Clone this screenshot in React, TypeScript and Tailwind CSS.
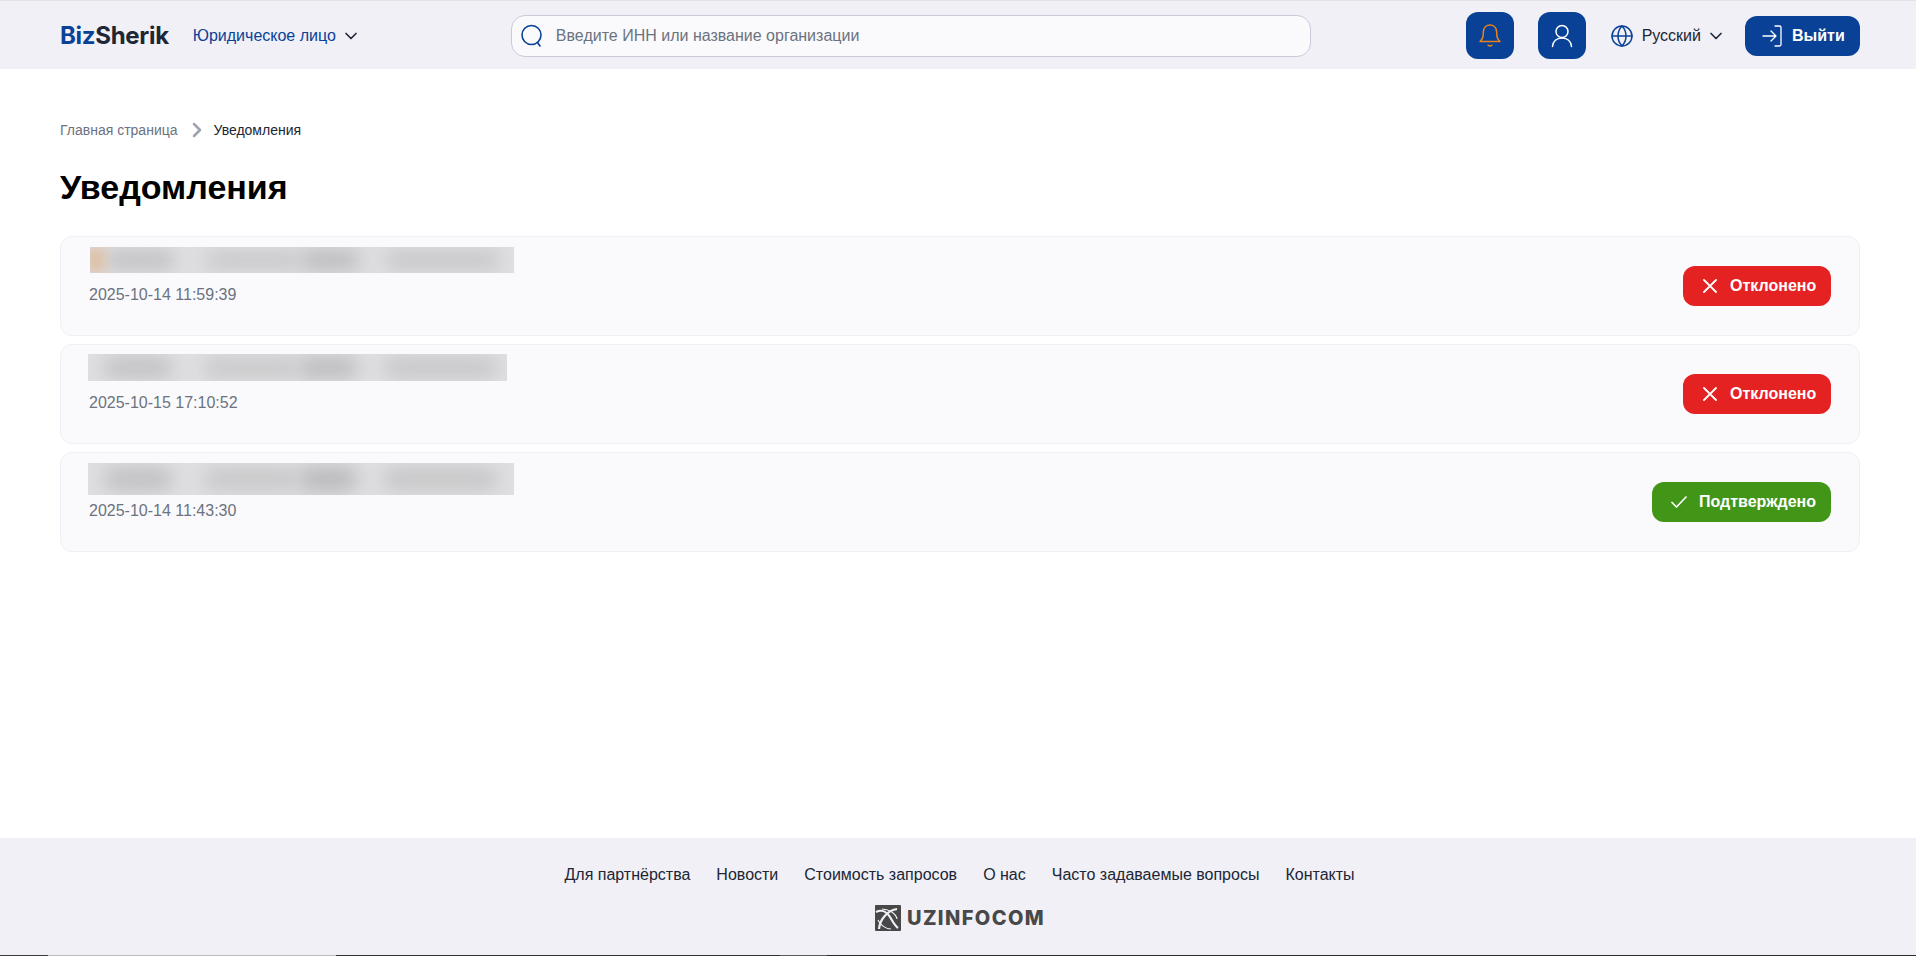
import React from "react";
import { ChevronDown, ChevronRight, Globe } from "lucide-react";

function Blur({ w, h, ml, tint }: { w: number; h: number; ml: number; tint?: boolean }) {
  return (
    <div className="relative overflow-hidden bg-[#dfdfe1]" style={{ width: w, height: h, marginLeft: ml }}>
      <div className="absolute inset-0 flex items-center pl-[15px]">
        <div className="h-[75%] w-[70px] rounded-full bg-[#c2c2c4] blur-[9px]" />
        <div className="ml-[30px] h-[70%] w-[95px] rounded-full bg-[#c8c8ca] blur-[9px]" />
        <div className="h-[80%] w-[60px] rounded-full bg-[#bcbcbe] blur-[9px]" />
        <div className="ml-[25px] h-[70%] w-[115px] rounded-full bg-[#c6c6c8] blur-[9px]" />
      </div>
      {tint && <div className="absolute -left-[4px] top-0 h-full w-[20px] bg-[#dcc4ad] blur-[5px]" />}
    </div>
  );
}

function Card({ ml, w, h, top, gap, date, status, tint }: { ml: number; w: number; h: number; top: number; gap: number; date: string; status: "no" | "ok"; tint?: boolean }) {
  return (
    <div className="flex h-[100px] items-start justify-between rounded-[12px] border border-[#f0f0f6] bg-[#fafafc] pr-[28px]">
      <div style={{ paddingTop: top }}>
        <Blur w={w} h={h} ml={ml} tint={tint} />
        <div className="ml-[28px] text-[16px] leading-[24px] text-[#6b7280]" style={{ marginTop: gap }}>{date}</div>
      </div>
      {status === "no" ? (
        <div className="mt-[29px] flex h-[40px] w-[148px] items-center rounded-[12px] bg-[#e52222] pl-[20px] text-[16px] font-bold text-white">
          <svg width="14" height="14" viewBox="0 0 14 14" fill="none" stroke="currentColor" strokeWidth="1.8" strokeLinecap="round">
            <path d="M1 1l12 12M13 1L1 13" />
          </svg>
          <span className="ml-[13px]">Отклонено</span>
        </div>
      ) : (
        <div className="mt-[29px] flex h-[40px] w-[179px] items-center rounded-[12px] bg-[#429617] pl-[19px] text-[16px] font-bold text-white">
          <svg width="16" height="12" viewBox="0 0 16 12" fill="none" stroke="currentColor" strokeWidth="1.7" strokeLinecap="round" strokeLinejoin="round">
            <path d="M1 6.5l4.500 4.500L15 1" />
          </svg>
          <span className="ml-[12px]">Подтверждено</span>
        </div>
      )}
    </div>
  );
}

const segments = [
  "w-[48px] bg-[#3a3a3a]",
  "w-[288px] bg-[#b9b9b9]",
  "w-[444px] bg-[#333331]",
  "w-[47px] bg-[#5c5c60]",
  "flex-1 bg-[#2b2b2b]",
];

export default function App() {
  return (
    <div className="flex h-[956px] flex-col overflow-hidden bg-white font-['Liberation_Sans',Arial,sans-serif]">
      <header className="flex h-[69px] items-center border-t border-[#e3e3e6] bg-[#f0f0f6] pl-[60px] pr-[56px] pt-[1px]">
        <div className="font-['Inter',sans-serif] text-[24px] font-bold tracking-[-0.3px] text-[#202634]">
          <span className="text-[#094196]">Biz</span>Sherik
        </div>
        <div className="ml-[24px] flex items-center text-[16px] text-[#094196]">
          Юридическое лицо
          <ChevronDown size={20} className="ml-[5px] text-[#202634]" />
        </div>
        <div className="ml-[150px] flex h-[42px] w-[800px] items-center rounded-[14px] border border-[#c9cbd9] bg-[#fafafc] pl-[8px]">
          <svg width="24" height="24" viewBox="0 0 24 24" fill="none" stroke="#094196" strokeWidth="1.6" strokeLinecap="round">
            <circle cx="11.500" cy="11" r="9.500" />
            <path d="M17.500 18.500l2.500 3.500" />
          </svg>
          <span className="ml-[12px] text-[16px] text-[#6b7280]">Введите ИНН или название организации</span>
        </div>
        <div className="ml-auto flex items-center">
          <button className="flex h-[47px] w-[48px] items-center justify-center rounded-[12px] bg-[#094196]">
            <svg width="24" height="24" viewBox="0 0 24 24" fill="none" stroke="#e8821e" strokeWidth="1.5" strokeLinecap="round" strokeLinejoin="round">
              <path d="M2 17.500c2-1.500 3-3.500 3.200-6.500l.2-3.500C5.700 3.800 8.400 1 12 1s6.300 2.800 6.600 6.500l.2 3.500c.2 3 1.200 5 3.200 6.500z" />
              <path d="M10 21.200c1.200 1 2.800 1 4 0" />
            </svg>
          </button>
          <button className="ml-[24px] flex h-[47px] w-[48px] items-center justify-center rounded-[12px] bg-[#094196]">
            <svg width="24" height="24" viewBox="0 0 24 24" fill="none" stroke="white" strokeWidth="1.5" strokeLinecap="round">
              <circle cx="12" cy="7.500" r="6" />
              <path d="M2.500 22.500c.5-5 4-8.500 9.500-8.500s9 3.500 9.500 8.500" />
            </svg>
          </button>
          <Globe size={24} strokeWidth={1.5} className="ml-[24px] text-[#094196]" />
          <span className="ml-[8px] text-[16px] text-[#202634]">Русский</span>
          <ChevronDown size={20} className="ml-[5px] text-[#202634]" />
          <button className="ml-[19px] flex h-[40px] w-[115px] items-center rounded-[12px] bg-[#094196] pl-[17px] text-[16px] font-bold text-white">
            <svg width="20" height="22" viewBox="0 0 20 22" fill="none" stroke="currentColor" strokeWidth="1.3" strokeLinecap="round" strokeLinejoin="round">
              <path d="M13 1h4.500a1.500 1.500 0 0 1 1.500 1.500v17a1.500 1.500 0 0 1-1.500 1.500H13" />
              <path d="M1 11h13M9 6l5 5-5 5" />
            </svg>
            <span className="ml-[10px]">Выйти</span>
          </button>
        </div>
      </header>

      <main className="flex-1 pl-[60px] pr-[56px]">
        <nav className="mt-[51px] flex h-[20px] items-center text-[14px]">
          <span className="text-[#6b7280]">Главная страница</span>
          <ChevronRight size={24} strokeWidth={2.5} className="ml-[7px] mr-[5px] text-[#9ca3af]" />
          <span className="text-[#202634]">Уведомления</span>
        </nav>
        <h1 className="mt-[27px] text-[34px] font-bold leading-[40px] text-black">Уведомления</h1>
        <div className="mt-[29px] flex flex-col gap-[8px]">
          <Card ml={29} w={424} h={26} top={10} gap={10} date="2025-10-14 11:59:39" status="no" tint />
          <Card ml={27} w={419} h={27} top={9} gap={10} date="2025-10-15 17:10:52" status="no" />
          <Card ml={27} w={426} h={32} top={10} gap={4} date="2025-10-14 11:43:30" status="ok" />
        </div>
      </main>

      <footer className="flex h-[118px] flex-col items-center bg-[#f0f0f6]">
        <div className="mt-[27px] flex gap-[26px] pl-[3px] text-[16px] leading-[20px] text-[#202634]">
          <span>Для партнёрства</span>
          <span>Новости</span>
          <span>Стоимость запросов</span>
          <span>О нас</span>
          <span>Часто задаваемые вопросы</span>
          <span>Контакты</span>
        </div>
        <div className="mt-[20px] flex items-center pl-[4px]">
          <svg width="26" height="26" viewBox="0 0 26 26">
            <path d="M1 0h24a1 1 0 0 1 1 1v24a1 1 0 0 1-1 1H1a1 1 0 0 1-1-1V1a1 1 0 0 1 1-1z" fill="#484848" />
            <path d="M1 7c6-3 11 0 14 5s5 9 8 11M22 4C14 5 5 13 4 24" fill="none" stroke="#f0f0f6" strokeWidth="2.200" />
            <path d="M7 4c6 0 14 4 15 10M3 15c2 5 8 9 13 9" fill="none" stroke="#f0f0f6" strokeWidth="1.200" />
          </svg>
          <span className="ml-[6px] font-['Inter',sans-serif] text-[20px] font-extrabold leading-[26px] tracking-[1.4px] text-[#484848]">UZINFOCOM</span>
        </div>
        <div className="mt-auto flex h-[1px] w-full">
          {segments.map((s) => (
            <div key={s} className={s} />
          ))}
        </div>
      </footer>
    </div>
  );
}
